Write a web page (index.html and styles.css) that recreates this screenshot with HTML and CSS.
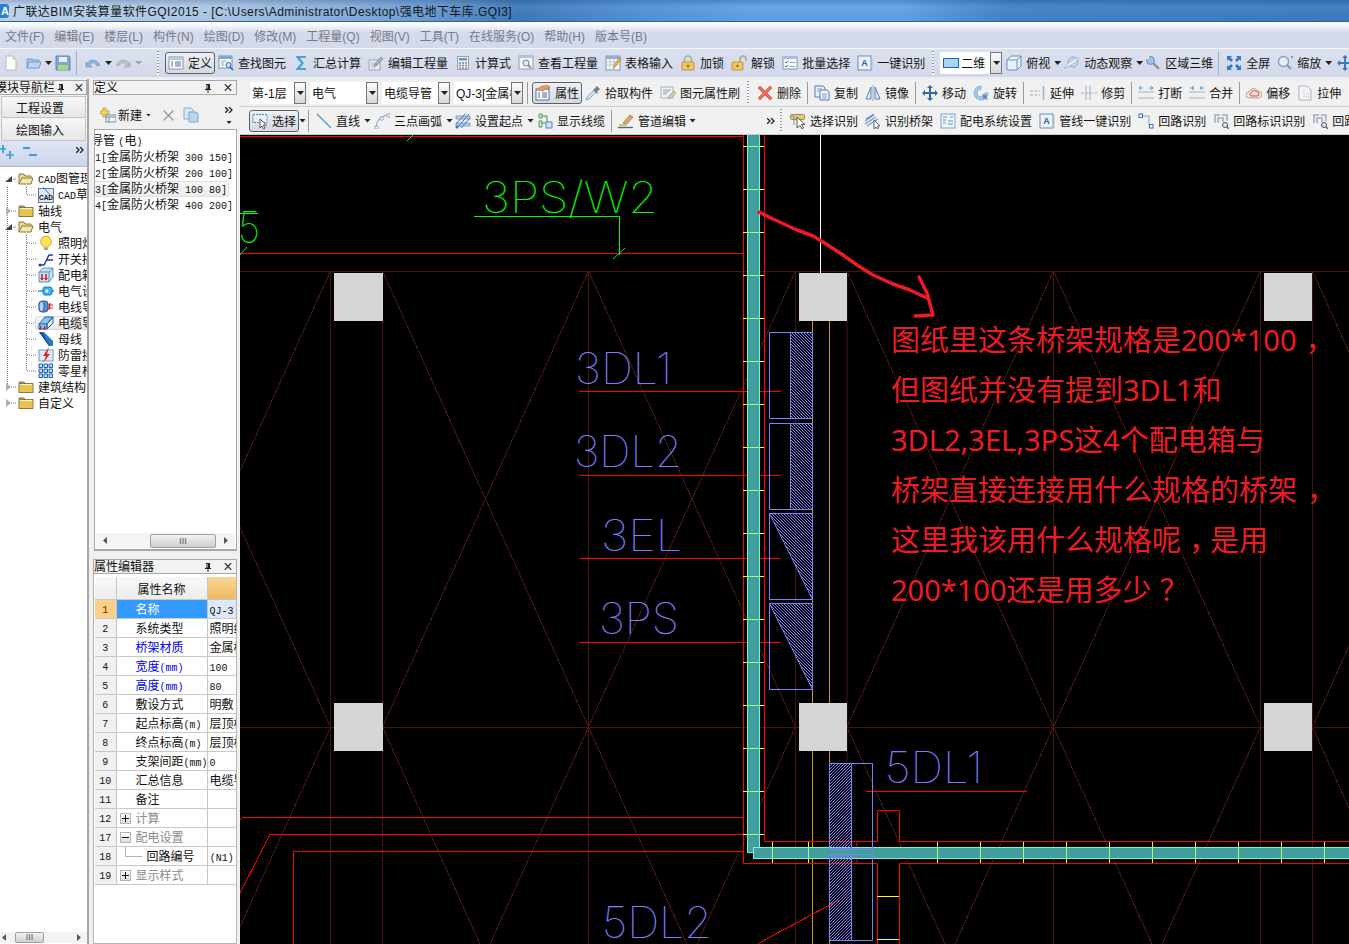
FILE: index.html
```html
<!DOCTYPE html>
<html lang="zh-CN">
<head>
<meta charset="utf-8">
<title>广联达BIM安装算量软件GQI2015</title>
<link rel="stylesheet" href="styles.css">
</head>
<body>
<svg class="defs" width="0" height="0" aria-hidden="true">
<defs>
<symbol id="i-new" viewBox="0 0 16 16"><path d="M3 1h7l3 3v11H3z" fill="#fff" stroke="#b8b8b8"/><path d="M10 1v3h3" fill="#e8e8e8" stroke="#b8b8b8"/></symbol>
<symbol id="i-open" viewBox="0 0 16 16"><path d="M1 13V4h5l1 1h6v2" fill="#a9c8ea" stroke="#6f9cc9"/><path d="M1 13l2-6h12l-2 6z" fill="#bcd6f2" stroke="#6f9cc9"/></symbol>
<symbol id="i-save" viewBox="0 0 16 16"><path d="M1 1h13l1 1v13H1z" fill="#7fa8d6" stroke="#5d86b5"/><path d="M4 2h8v5H4z" fill="#e8f0f8"/><path d="M3 10h10v5H3z" fill="#a8d878"/></symbol>
<symbol id="i-undo" viewBox="0 0 16 16"><path d="M2 10C3 4 11 3 15 10l-3 1C10 7 7 7 5 10l2 2H1V7z" fill="#8fb4dc" stroke="#6a94c2" stroke-width=".7"/></symbol>
<symbol id="i-redo" viewBox="0 0 16 16"><path d="M14 10C13 4 5 3 1 10l3 1c2-4 5-4 7-1l-2 2h6V7z" fill="#bcc0c8" stroke="#a4a8b0" stroke-width=".7"/></symbol>
<symbol id="i-def" viewBox="0 0 16 16"><rect x="1" y="2" width="14" height="12" fill="#fff" stroke="#7f94b4"/><path d="M1 2h14v3H1z" fill="#b4c8e4"/><path d="M7 7h6M7 9h6M7 11h6M3 7h2M3 9h2M3 11h2" stroke="#4a6a94"/></symbol>
<symbol id="i-find" viewBox="0 0 16 16"><rect x="1" y="1" width="13" height="12" fill="#fff" stroke="#6f93bd"/><path d="M1 1h13v3H1z" fill="#7fa6d3"/><path d="M3 6h5M3 8h3M3 10h3" stroke="#8aa"/><circle cx="10.5" cy="10" r="2.5" fill="#cfe6fa" stroke="#2b6aa8"/><path d="M12 12l3 3" stroke="#2b6aa8" stroke-width="1.6"/></symbol>
<symbol id="i-sum" viewBox="0 0 16 16"><path d="M3 1h10v2H7l4 5-4 5h6v2H3v-1l5-6-5-6z" fill="#49a4dc"/></symbol>
<symbol id="i-edit" viewBox="0 0 16 16"><path d="M1 5h11v10H1z" fill="#e8ecf2" stroke="#9aa4b0"/><path d="M3 8h7M3 10h7M3 12h5" stroke="#b0b8c4"/><path d="M7 9l6-7 2 2-6 6-3 1z" fill="#a8b4c4" stroke="#6f7c8c" stroke-width=".7"/></symbol>
<symbol id="i-calc" viewBox="0 0 16 16"><rect x="2.500" y="1.500" width="11" height="13" fill="#eef0f4" stroke="#97a0ac"/><rect x="4" y="3" width="8" height="2.500" fill="#5f9bd2"/><path d="M4 8h2M7 8h2M10 8h2M4 10.500h2M7 10.500h2M10 10.500h2M4 13h2M7 13h2M10 13h2" stroke="#7a8490" stroke-width="1.300"/></symbol>
<symbol id="i-view" viewBox="0 0 16 16"><rect x="1" y="1" width="14" height="13" fill="#f2f4f8" stroke="#96a0ae"/><path d="M1 1h14v2H1z" fill="#b5c5da"/><circle cx="8" cy="8" r="3" fill="#dbe9f6" stroke="#71869e"/><path d="M10 10l3 3" stroke="#8a7a5a" stroke-width="1.600"/></symbol>
<symbol id="i-tbl" viewBox="0 0 16 16"><rect x="1" y="1" width="14" height="14" fill="#fff" stroke="#7f93ad"/><path d="M1 1h14v3H1z" fill="#8fb0d6"/><path d="M1 7h14M1 10h14M5 4v11M9 4v11" stroke="#b6c2d0"/><path d="M8 14l1-4 5-7 2 1-5 7z" fill="#e8b93a" stroke="#a07c18" stroke-width=".6"/></symbol>
<symbol id="i-lock" viewBox="0 0 16 16"><path d="M4.500 7V4.500a3.500 3.500 0 0 1 7 0V7" fill="none" stroke="#b0a890" stroke-width="1.700"/><rect x="2" y="7" width="12" height="8" rx="1" fill="#edc765" stroke="#b8923a"/><circle cx="8" cy="11" r="1.200" fill="#8c6a1a"/></symbol>
<symbol id="i-unlock" viewBox="0 0 16 16"><path d="M9 7V4a3 3 0 0 1 6 0v2" fill="none" stroke="#b0a890" stroke-width="1.700"/><rect x="1" y="7" width="11" height="8" rx="1" fill="#edc765" stroke="#b8923a"/><circle cx="6.500" cy="11" r="1.200" fill="#8c6a1a"/></symbol>
<symbol id="i-batch" viewBox="0 0 16 16"><rect x="1" y="2" width="14" height="12" fill="#f4f7fb" stroke="#7f98b8"/><path d="M1 2h14v2H1z" fill="#a6bfdc"/><path d="M3 7l1 1 2-2M3 11l1 1 2-2" fill="none" stroke="#4a7a3a"/><path d="M8 7.500h5M8 11.500h5" stroke="#8da0b8"/></symbol>
<symbol id="i-a" viewBox="0 0 16 16"><rect x="1" y="1" width="13" height="14" fill="#eaf2fb" stroke="#6f8eb4"/><rect x="14" y="3" width="1.500" height="12" fill="#b4bcc6"/><text x="7.500" y="10.500" font-size="9" font-weight="700" text-anchor="middle" fill="#2f5f9c" font-family="Liberation Sans">A</text></symbol>
<symbol id="i-rect" viewBox="0 0 16 16"><rect x=".5" y="3.500" width="15" height="9" fill="#a9d3f2" stroke="#1c6aa8"/></symbol>
<symbol id="i-cube" viewBox="0 0 16 16"><path d="M1 5h10v10H1zM1 5l4-4h10v10l-4 4M11 5l4-4" fill="#e8f2fb" stroke="#6c92b6"/></symbol>
<symbol id="i-orbit" viewBox="0 0 16 16"><circle cx="9" cy="7" r="5" fill="#c5d9ee" stroke="#8aa6c6"/><path d="M0 13C4 13 14 6 15 3c-2-1-11 4-15 10z" fill="#e6eef7" stroke="#8aa6c6" stroke-width=".7"/></symbol>
<symbol id="i-r3d" viewBox="0 0 16 16"><path d="M8 8l6 6" stroke="#8a8f96" stroke-width="2.400"/><circle cx="5.500" cy="5.500" r="4" fill="#9cc2ea" stroke="#7089a8"/><path d="M1 1h3v3H1z" fill="#f4e6a8"/></symbol>
<symbol id="i-full" viewBox="0 0 16 16"><path d="M1 1h5L4.500 2.500 7 5 5 7 2.500 4.500 1 6zM15 1v5l-1.500-1.500L11 7 9 5l2.500-2.500L10 1zM1 15v-5l1.500 1.500L5 9l2 2-2.500 2.500L6 15zM15 15h-5l1.500-1.500L9 11l2-2 2.500 2.500L15 10z" fill="#3a78c0"/></symbol>
<symbol id="i-zoom" viewBox="0 0 16 16"><circle cx="6.500" cy="6.500" r="5" fill="#e4eef8" stroke="#7e9fc4" stroke-width="1.300"/><path d="M10 10l4 4" stroke="#8a96a4" stroke-width="2"/><path d="M0 15h15" stroke="#d8d8d8"/><path d="M14 2h2M15 1v2" stroke="#6688aa"/></symbol>
<symbol id="i-pan" viewBox="0 0 16 16"><path d="M8 0l3 3H9v4h4V5l3 3-3 3V9H9v4h2l-3 3-3-3h2V9H3v2L0 8l3-3v2h4V3H5z" fill="#3b78c4"/></symbol>
<symbol id="i-prop" viewBox="0 0 16 16"><rect x="1" y="4" width="13" height="11" fill="#fff" stroke="#4f6f9a"/><path d="M3 8h2M7 8h5M3 10h2M7 10h5M3 12h2M7 12h5" stroke="#3a6aa8"/><path d="M2 5c3-4 7-5 12-4l1 2c-3 0-5 2-7 3z" fill="#e0a060" stroke="#a86a30" stroke-width=".6"/></symbol>
<symbol id="i-pick" viewBox="0 0 16 16"><path d="M1 15l1-3 7-7 2 2-7 7z" fill="#cfe4f4" stroke="#6a9cc4" stroke-width=".8"/><path d="M9 4l3-3 3 3-3 3 1 1-1 1-4-4 1-1z" fill="#76808c"/></symbol>
<symbol id="i-brush" viewBox="0 0 16 16"><rect x="1" y="2" width="12" height="11" fill="#f2f4f8" stroke="#aab2bc"/><path d="M3 5h8M3 7h6M3 9h4" stroke="#8ca2ba"/><path d="M8 12l6-6 2 2-6 6z" fill="#d8cfa8" stroke="#9a9070" stroke-width=".7"/></symbol>
<symbol id="i-del" viewBox="0 0 16 16"><path d="M1 3l2-2 5 5 5-5 2 2-5 5 5 5-2 2-5-5-5 5-2-2 5-5z" fill="#ee6a5a" stroke="#c8402f" stroke-width=".6"/></symbol>
<symbol id="i-copy" viewBox="0 0 16 16"><path d="M1 1h8l2 2v9H1z" fill="#eaf3fb" stroke="#4f7fb0"/><path d="M6 5h7l2 2v8H6z" fill="#f4f8fc" stroke="#4f7fb0"/><path d="M3 4h5M3 6h2M8 9h5M8 11h5M8 13h5" stroke="#7fa4c8"/></symbol>
<symbol id="i-mirror" viewBox="0 0 16 16"><path d="M6 2v12H1zM10 2v12h5z" fill="#dfe9f6" stroke="#5480b4"/><path d="M8 0v16" stroke="#98a8bc"/></symbol>
<symbol id="i-move" viewBox="0 0 16 16"><path d="M8 0l3 3H9v4h4V5l3 3-3 3V9H9v4h2l-3 3-3-3h2V9H3v2L0 8l3-3v2h4V3H5z" fill="#3068b4"/></symbol>
<symbol id="i-rot" viewBox="0 0 16 16"><path d="M8 1a7 7 0 1 0 7 7h-3a4 4 0 1 1-4-4z" fill="#a8c8e8" stroke="#6f9ccc" stroke-width=".7"/><path d="M9 9l6 2-2 1 2 2-1 1-2-2-1 2z" fill="#5a86bc"/></symbol>
<symbol id="i-ext" viewBox="0 0 16 16"><path d="M13.500 1v14M0 6h10M0 10h10" stroke="#9db0c6" stroke-dasharray="3 1.500"/><path d="M13.500 1v14" stroke="#9db0c6" stroke-width="1.500"/></symbol>
<symbol id="i-trim" viewBox="0 0 16 16"><path d="M5 1v14M9 1v14" stroke="#9db0c6"/><path d="M0 8h16" stroke="#9db0c6" stroke-dasharray="3 1.500"/></symbol>
<symbol id="i-break" viewBox="0 0 16 16"><path d="M0 7h16M0 13h16" stroke="#9cb2ca"/><path d="M5 3L1 3m2-2L1 3l2 2M11 3h4m-2-2l2 2-2 2" fill="none" stroke="#5d94c4"/></symbol>
<symbol id="i-join" viewBox="0 0 16 16"><path d="M0 7h16M0 13h16" stroke="#9cb2ca"/><path d="M1 3h4m-2-2l2 2-2 2M15 3h-4m2-2l-2 2 2 2" fill="none" stroke="#5d94c4"/></symbol>
<symbol id="i-off" viewBox="0 0 16 16"><path d="M3 13a3 3 0 0 1 0-6 5 5 0 0 1 9-1 3.500 3.500 0 0 1 1 7z" fill="#f6e2dc" stroke="#b8a0a0"/><path d="M5 11a2 2 0 0 1 0-3 3.500 3.500 0 0 1 6-1 2 2 0 0 1 0 4z" fill="none" stroke="#d84a3a"/></symbol>
<symbol id="i-str" viewBox="0 0 16 16"><path d="M2 1h8l4 4v10H2z" fill="#f6f6f6" stroke="#a8b4c2"/><path d="M7 5v8M9 9h3M9 12h3" stroke="#a8b4c2" stroke-dasharray="1 1"/></symbol>
<symbol id="i-sel" viewBox="0 0 16 16"><rect x="1" y="1.500" width="14" height="8" fill="#e6f0fa" stroke="#4f86c4" stroke-dasharray="2 1"/><path d="M8 6v9l2-2 1.500 3 1.500-1-1.500-3h3z" fill="#fff" stroke="#555"/></symbol>
<symbol id="i-line" viewBox="0 0 16 16"><path d="M1 1l14 14" stroke="#5c92c8" stroke-width="1.200"/></symbol>
<symbol id="i-arc" viewBox="0 0 16 16"><path d="M2 14C3 7 7 3 14 2" fill="none" stroke="#7e9abc"/><path d="M1 13h3v3H1zM6 4h3v3H6zM13 1h3v3h-3z" fill="#fff" stroke="#7e9abc" stroke-width=".8"/></symbol>
<symbol id="i-start" viewBox="0 0 16 16"><path d="M1 3h14v3H1zM1 10h14v3H1z" fill="#bcd0ea" stroke="#5c88c0" stroke-width=".7"/><path d="M2 15L14 1M6 15L15 5M1 11L10 1" stroke="#4876ae"/><circle cx="2" cy="14" r="1.500" fill="#3a78c0"/></symbol>
<symbol id="i-show" viewBox="0 0 16 16"><path d="M2 1h3v4H2zM2 8h3v6H2zM5 3h5v4M5 10h4M10 7v3" fill="#cfeacf" stroke="#4f9a5a"/><rect x="9" y="9" width="6" height="6" fill="#d0e4f8" stroke="#4f86c4"/></symbol>
<symbol id="i-pipe" viewBox="0 0 16 16"><path d="M5 10l7-8 3 2-7 8z" fill="#d9a868" stroke="#a07438" stroke-width=".7"/><path d="M1 11h8v2H1z" fill="#e8c050"/><path d="M0 14.500h15" stroke="#2f6fb0" stroke-width="1.400"/></symbol>
<symbol id="i-selid" viewBox="0 0 16 16"><rect x=".5" y="1.500" width="14" height="5" rx="1" fill="#f0cc60" stroke="#8a8a8a"/><path d="M1 3h3v9" fill="none" stroke="#8a8a8a"/><path d="M7 4v11l3-2.500 2 3.500 1.500-1-2-3.500H15z" fill="#fff" stroke="#555"/></symbol>
<symbol id="i-bridge" viewBox="0 0 16 16"><path d="M0 8l9-6M0 11l11-7M2 13l11-7M1 6l8-5" stroke="#6a98cc" stroke-width="1.300"/><path d="M9 7v9l2-2 1 2 1.500-1-1-2h2.500z" fill="#fff" stroke="#666"/></symbol>
<symbol id="i-pd" viewBox="0 0 16 16"><rect x="1" y="1" width="14" height="14" fill="#eef5fb" stroke="#7ea6cc"/><path d="M3 4h4M3 7h3M3 10h3M10 4h3M8 8h5M8 11h5" stroke="#5f92c4"/></symbol>
<symbol id="i-loop" viewBox="0 0 16 16"><path d="M3 3h8v10h3" fill="none" stroke="#8ca0b8"/><rect x="1" y="1" width="3.500" height="3.500" fill="#fff" stroke="#2f6fd0"/><rect x="11.500" y="11.500" width="3.500" height="3.500" fill="#fff" stroke="#2f6fd0"/></symbol>
<symbol id="i-loopn" viewBox="0 0 16 16"><path d="M2 10V2h5M9 2h5v6M5 10V5h5v4" fill="none" stroke="#96aac2" stroke-width="1.500"/><circle cx="12" cy="12" r="2.500" fill="#d8e8f6" stroke="#555"/><path d="M14 14l2 2" stroke="#555" stroke-width="1.300"/></symbol>
<symbol id="f-open" viewBox="0 0 16 16"><path d="M1 13V3h5l1 2h6v2" fill="#ecd895" stroke="#8c7a44"/><path d="M1 13l3-6h11l-2 6z" fill="#f4e6b0" stroke="#8c7a44"/></symbol>
<symbol id="f-closed" viewBox="0 0 16 16"><path d="M1 4V3h5l1 1z" fill="#e8d488" stroke="#8c7a44"/><rect x="1" y="4.500" width="14" height="9" fill="#e6c44e" stroke="#8c7a44"/><path d="M2 5.500h12" stroke="#fff2b8"/></symbol>
<symbol id="t-cad" viewBox="0 0 16 16"><rect x=".5" y="1.500" width="15" height="14" fill="#dce8f6" stroke="#5a7ea8"/><path d="M5 0l7 8" stroke="#4a6a94"/><text x="8" y="13" font-size="6.500" font-weight="700" text-anchor="middle" fill="#111" font-family="Liberation Sans">CAD</text></symbol>
<symbol id="t-bulb" viewBox="0 0 16 16"><path d="M8 1a5.500 5.500 0 0 0-3 10l1 1h4l1-1A5.500 5.500 0 0 0 8 1z" fill="#ffe25a" stroke="#d2a820"/><path d="M6 12.500h4v2.500H6z" fill="#9aa4b0"/></symbol>
<symbol id="t-sw" viewBox="0 0 16 16"><path d="M1 14h5l5-10h4M9 9h6" fill="none" stroke="#2238b8" stroke-width="1.400"/><circle cx="2" cy="14" r="1.500" fill="#2238b8"/></symbol>
<symbol id="t-box" viewBox="0 0 16 16"><path d="M1 5h10v10H1zM1 5l4-4h10v9l-4 5M11 5l4-4" fill="#c7e0f4" stroke="#5e8fc0"/><path d="M4 7v6M8 7v6" stroke="#d81818" stroke-width="1.500"/><path d="M2.500 11L4 13l1.500-2M6.500 11L8 13l1.500-2" fill="none" stroke="#d81818"/></symbol>
<symbol id="t-conn" viewBox="0 0 16 16"><path d="M0 8h16" stroke="#2aa0d8" stroke-width="1.600"/><rect x="5" y="4" width="9" height="8" rx="2" fill="#38b8e8" stroke="#1878b0"/><circle cx="9" cy="8" r="1.500" fill="#fff"/></symbol>
<symbol id="t-wire" viewBox="0 0 16 16"><rect x="1" y="2" width="9" height="11" rx="3" fill="#5e8ec4" stroke="#2a5a94"/><ellipse cx="3.500" cy="7.500" rx="2.500" ry="5" fill="#b6d0ec" stroke="#2a5a94"/><path d="M10 6h5M10 9h5M12 4l-1 7" stroke="#e01818" stroke-width="1.200"/></symbol>
<symbol id="t-tray" viewBox="0 0 16 16"><path d="M1 9l6-7h8L9 9v5H1z" fill="#8fc4ec" stroke="#1e60a8"/><path d="M1 9h8l6-7M9 9v5l6-6V2" fill="none" stroke="#1e60a8"/><path d="M2 15l1-4M6 15l1-4" stroke="#e01818" stroke-width="1.300"/></symbol>
<symbol id="t-bus" viewBox="0 0 16 16"><path d="M1 1h5l9 9v5h-4z" fill="#2a78c8"/><path d="M1 1h3l8 14h-1z" fill="#1a4a98"/></symbol>
<symbol id="t-thun" viewBox="0 0 16 16"><rect x="1" y="3" width="14" height="11" fill="#dcecf8" stroke="#6c98c4"/><path d="M11 0L5 9h3l-3 7 7-9H9z" fill="#e82018"/></symbol>
<symbol id="t-grid" viewBox="0 0 16 16"><path d="M1 1h3.500v3.500H1zM6 1h3.500v3.500H6zM11 1h3.500v3.500H11zM1 6h3.500v3.500H1zM6 6h3.500v3.500H6zM11 6h3.500v3.500H11zM1 11h3.500v3.500H1zM6 11h3.500v3.500H6zM11 11h3.500v3.500H11z" fill="#cde0f4" stroke="#1a5cb0"/></symbol>
<symbol id="a-add" viewBox="0 0 16 16"><path d="M3 1h3v3h3v3H6v3H3V7H0V4h3z" fill="#f4d264" stroke="#b8922c" stroke-width=".7"/><rect x="6" y="8" width="10" height="7" fill="#eef3fa" stroke="#6f8cb0"/><path d="M6 10h10M9 10v5" stroke="#6f8cb0"/></symbol>
<symbol id="a-x" viewBox="0 0 16 16"><path d="M2 2l12 12M14 2L2 14" stroke="#808890" stroke-width="1.500"/></symbol>
<symbol id="a-copy" viewBox="0 0 16 16"><path d="M1 1h7l2 2v9H1z" fill="#d8e6f6" stroke="#8fb0d4"/><path d="M6 5h7l2 2v8H6z" fill="#bcd4ee" stroke="#7fa4cc"/></symbol>
<symbol id="n-plus" viewBox="0 0 16 16"><path d="M3 1v8M0 5h6" stroke="#3a9ae0" stroke-width="1.700"/><path d="M10 7v8M6 11h8" stroke="#3a9ae0" stroke-width="1.700"/></symbol>
<symbol id="n-minus" viewBox="0 0 16 16"><path d="M1 4h7M7 11h8" stroke="#3a9ae0" stroke-width="2"/></symbol>
<symbol id="pin" viewBox="0 0 8 10"><path d="M2 1h4v5h1v1H4.500v3h-1V7H1V6h1z" fill="#222"/><path d="M3 2v3.500" stroke="#fff"/></symbol>
<symbol id="more" viewBox="0 0 8 6"><path d="M0 0l3 3-3 3M4 0l3 3-3 3" fill="none" stroke="#222" stroke-width="1.300"/></symbol>
<pattern id="hatchA" width="3" height="3" patternUnits="userSpaceOnUse"><path d="M0 0l3 3" stroke="#8080ff" stroke-width="1" shape-rendering="crispEdges"/></pattern>
<pattern id="hatchB" width="3" height="3" patternUnits="userSpaceOnUse"><path d="M0 3l3-3" stroke="#8080ff" stroke-width="1" shape-rendering="crispEdges"/></pattern>
<clipPath id="trayV"><rect x="747" y="135" width="13" height="718"/></clipPath>
<clipPath id="trayH"><rect x="753" y="847" width="596" height="12"/></clipPath>
</defs>
</svg>

<header class="titlebar">
  <span class="appicon">A</span>
  <span class="titletext">广联达BIM安装算量软件GQI2015 - [C:\Users\Administrator\Desktop\强电地下车库.GQI3]</span>
</header>

<nav class="menubar">
  <span>文件(F)</span><span>编辑(E)</span><span>楼层(L)</span><span>构件(N)</span><span>绘图(D)</span><span>修改(M)</span><span>工程量(Q)</span><span>视图(V)</span><span>工具(T)</span><span>在线服务(O)</span><span>帮助(H)</span><span>版本号(B)</span>
</nav>

<div class="toolbar main-tools">
  <svg class="ic mr7"><use href="#i-new"/></svg>
  <svg class="ic mr3"><use href="#i-open"/></svg><i class="arr mr3"></i>
  <svg class="ic mr5"><use href="#i-save"/></svg>
  <i class="sep dim mr8"></i>
  <svg class="ic mr4"><use href="#i-undo"/></svg><i class="arr mr3"></i>
  <svg class="ic mr4"><use href="#i-redo"/></svg><i class="arr off mr15"></i>
  <i class="grip mr6"></i>
  <span class="ti btn mr3"><svg class="ic"><use href="#i-def"/></svg>定义</span>
  <span class="ti"><svg class="ic"><use href="#i-find"/></svg>查找图元</span>
  <span class="ti"><svg class="ic"><use href="#i-sum"/></svg>汇总计算</span>
  <span class="ti"><svg class="ic"><use href="#i-edit"/></svg>编辑工程量</span>
  <span class="ti"><svg class="ic"><use href="#i-calc"/></svg>计算式</span>
  <span class="ti"><svg class="ic"><use href="#i-view"/></svg>查看工程量</span>
  <span class="ti"><svg class="ic"><use href="#i-tbl"/></svg>表格输入</span>
  <span class="ti"><svg class="ic"><use href="#i-lock"/></svg>加锁</span>
  <span class="ti"><svg class="ic"><use href="#i-unlock"/></svg>解锁</span>
  <span class="ti"><svg class="ic"><use href="#i-batch"/></svg>批量选择</span>
  <span class="ti"><svg class="ic"><use href="#i-a"/></svg>一键识别</span>
  <i class="grip mr6"></i>
  <span class="combo mode mr4"><span class="val"><svg class="ic"><use href="#i-rect"/></svg>二维</span><b class="drop"></b></span>
  <span class="ti mr4"><svg class="ic"><use href="#i-cube"/></svg>俯视</span><i class="arr mr3"></i>
  <span class="ti mr4"><svg class="ic"><use href="#i-orbit"/></svg>动态观察</span><i class="arr mr2"></i>
  <span class="ti mr5"><svg class="ic"><use href="#i-r3d"/></svg>区域三维</span>
  <i class="sep dim mr7"></i>
  <span class="ti mr7"><svg class="ic"><use href="#i-full"/></svg>全屏</span>
  <span class="ti mr4"><svg class="ic"><use href="#i-zoom"/></svg>缩放</span><i class="arr mr5"></i>
  <svg class="ic"><use href="#i-pan"/></svg>
</div>

<main class="workspace">
  <aside class="nav">
    <div class="phead navhead"><span class="ptitle">模块导航栏</span><svg class="pin"><use href="#pin"/></svg><span class="close">×</span></div>
    <div class="navbtn first">工程设置</div>
    <div class="navbtn">绘图输入</div>
    <div class="navtools">
      <svg class="ic"><use href="#n-plus"/></svg><svg class="ic"><use href="#n-minus"/></svg>
      <svg class="more"><use href="#more"/></svg>
    </div>
    <div class="tree">
      <svg class="treelines" width="85" height="240"><path d="M7.500 19V219M26.500 19v8M26.500 67V203M11 11h6M11 43h6M11 59h6M11 219h6M11 235h6M27 27h10M27 75h10M27 91h10M27 107h10M27 123h10M27 139h10M27 155h10M27 171h10M27 187h10M27 203h10" stroke="#777" stroke-dasharray="1 1" fill="none"/></svg>
      <div class="tr"><i class="tw open"></i><svg class="ic"><use href="#f-open"/></svg><span><span class="m">CAD</span>图管理</span></div>
      <div class="tr lv"><svg class="ic"><use href="#t-cad"/></svg><span><span class="m">CAD</span>草图</span></div>
      <div class="tr"><i class="tw"></i><svg class="ic"><use href="#f-closed"/></svg><span>轴线</span></div>
      <div class="tr"><i class="tw open"></i><svg class="ic"><use href="#f-open"/></svg><span>电气</span></div>
      <div class="tr lv"><svg class="ic"><use href="#t-bulb"/></svg><span>照明灯具</span></div>
      <div class="tr lv"><svg class="ic"><use href="#t-sw"/></svg><span>开关插座</span></div>
      <div class="tr lv"><svg class="ic"><use href="#t-box"/></svg><span>配电箱柜</span></div>
      <div class="tr lv"><svg class="ic"><use href="#t-conn"/></svg><span>电气设备</span></div>
      <div class="tr lv"><svg class="ic"><use href="#t-wire"/></svg><span>电线导管</span></div>
      <div class="tr lv cur"><svg class="ic"><use href="#t-tray"/></svg><span>电缆导管</span></div>
      <div class="tr lv"><svg class="ic"><use href="#t-bus"/></svg><span>母线</span></div>
      <div class="tr lv"><svg class="ic"><use href="#t-thun"/></svg><span>防雷接地</span></div>
      <div class="tr lv"><svg class="ic"><use href="#t-grid"/></svg><span>零星构件</span></div>
      <div class="tr"><i class="tw"></i><svg class="ic"><use href="#f-closed"/></svg><span>建筑结构</span></div>
      <div class="tr"><i class="tw"></i><svg class="ic"><use href="#f-closed"/></svg><span>自定义</span></div>
      <div class="hscroll navscroll"><i class="sl"></i><span class="thumb">III</span><i class="sr"></i></div>
    </div>
  </aside>

  <section class="defcol">
    <div class="phead"><span class="ptitle">定义</span><svg class="pin"><use href="#pin"/></svg><span class="close">×</span></div>
    <div class="deftools">
      <svg class="ic"><use href="#a-add"/></svg><span class="newlabel">新建</span><i class="arr small"></i>
      <svg class="ic xicon"><use href="#a-x"/></svg><svg class="ic"><use href="#a-copy"/></svg>
      <span class="moremark"><svg class="more"><use href="#more"/></svg><i class="arr small"></i></span>
    </div>
    <div class="deflist">
      <div class="dr head"><span class="c">电缆导管</span> <span class="m">(</span><span class="c">电</span><span class="m">)</span></div>
      <div class="dr"><span class="m">QJ-1[</span><span class="c">金属防火桥架</span><span class="m"> 300 150]</span></div>
      <div class="dr"><span class="m">QJ-2[</span><span class="c">金属防火桥架</span><span class="m"> 200 100]</span></div>
      <div class="dr sel"><span class="m">QJ-3[</span><span class="c">金属防火桥架</span><span class="m"> 100 80]</span></div>
      <div class="dr"><span class="m">QJ-4[</span><span class="c">金属防火桥架</span><span class="m"> 400 200]</span></div>
      <div class="hscroll defscroll"><i class="sl"></i><span class="thumb">III</span><i class="sr"></i></div>
    </div>
    <div class="phead prophead"><span class="ptitle wide">属性编辑器</span><svg class="pin"><use href="#pin"/></svg><span class="close">×</span></div>
    <div class="propbox">
      <table class="prop">
        <colgroup><col class="cn"><col class="cl"><col class="cv"></colgroup>
        <thead><tr><th></th><th>属性名称</th><th class="valh"></th></tr></thead>
        <tbody>
          <tr class="cur"><td class="n">1</td><td class="k">名称</td><td class="v"><span class="m">QJ-3</span></td></tr>
          <tr><td class="n">2</td><td class="k">系统类型</td><td class="v">照明线路</td></tr>
          <tr><td class="n">3</td><td class="k pub">桥架材质</td><td class="v">金属桥架</td></tr>
          <tr><td class="n">4</td><td class="k pub">宽度<span class="m">(mm)</span></td><td class="v"><span class="m">100</span></td></tr>
          <tr><td class="n">5</td><td class="k pub">高度<span class="m">(mm)</span></td><td class="v"><span class="m">80</span></td></tr>
          <tr><td class="n">6</td><td class="k">敷设方式</td><td class="v">明敷</td></tr>
          <tr><td class="n">7</td><td class="k">起点标高<span class="m">(m)</span></td><td class="v">层顶标高</td></tr>
          <tr><td class="n">8</td><td class="k">终点标高<span class="m">(m)</span></td><td class="v">层顶标高</td></tr>
          <tr><td class="n">9</td><td class="k">支架间距<span class="m">(mm)</span></td><td class="v"><span class="m">0</span></td></tr>
          <tr><td class="n">10</td><td class="k">汇总信息</td><td class="v">电缆导管</td></tr>
          <tr><td class="n">11</td><td class="k">备注</td><td class="v"></td></tr>
          <tr><td class="n">12</td><td class="k grp"><i class="pm plus"></i>计算</td><td class="v"></td></tr>
          <tr><td class="n">17</td><td class="k grp"><i class="pm"></i>配电设置</td><td class="v"></td></tr>
          <tr><td class="n">18</td><td class="k sub"><i class="elbow"></i>回路编号</td><td class="v mid"><span class="m">(N1)</span></td></tr>
          <tr><td class="n">19</td><td class="k grp"><i class="pm plus"></i>显示样式</td><td class="v"></td></tr>
        </tbody>
      </table>
    </div>
  </section>

  <section class="stage">
    <div class="toolbar row2">
      <span class="combo c1"><span class="val">第-1层</span><b class="drop"></b></span>
      <span class="combo c2"><span class="val">电气</span><b class="drop"></b></span>
      <span class="combo c2"><span class="val">电缆导管</span><b class="drop"></b></span>
      <span class="combo c3"><span class="val">QJ-3[金属桥架</span><b class="drop"></b></span>
      <i class="sep"></i>
      <span class="ti btn mr3"><svg class="ic"><use href="#i-prop"/></svg>属性</span>
      <span class="ti"><svg class="ic"><use href="#i-pick"/></svg>拾取构件</span>
      <span class="ti"><svg class="ic"><use href="#i-brush"/></svg>图元属性刷</span>
      <i class="grip mr8"></i>
      <span class="ti ms"><svg class="ic"><use href="#i-del"/></svg>删除</span><i class="sep sp"></i>
      <span class="ti"><svg class="ic"><use href="#i-copy"/></svg>复制</span>
      <span class="ti ms"><svg class="ic"><use href="#i-mirror"/></svg>镜像</span><i class="sep sp"></i>
      <span class="ti"><svg class="ic"><use href="#i-move"/></svg>移动</span>
      <span class="ti ms"><svg class="ic"><use href="#i-rot"/></svg>旋转</span><i class="sep sp"></i>
      <span class="ti"><svg class="ic"><use href="#i-ext"/></svg>延伸</span>
      <span class="ti ms"><svg class="ic"><use href="#i-trim"/></svg>修剪</span><i class="sep sp"></i>
      <span class="ti"><svg class="ic"><use href="#i-break"/></svg>打断</span>
      <span class="ti ms"><svg class="ic"><use href="#i-join"/></svg>合并</span><i class="sep sp"></i>
      <span class="ti"><svg class="ic"><use href="#i-off"/></svg>偏移</span>
      <span class="ti"><svg class="ic"><use href="#i-str"/></svg>拉伸</span>
    </div>
    <div class="toolbar row3">
      <span class="ti btn mr0"><svg class="ic"><use href="#i-sel"/></svg>选择</span><i class="arr mr2"></i>
      <i class="sep"></i>
      <span class="ti mr4"><svg class="ic"><use href="#i-line"/></svg>直线</span><i class="arr mr3"></i>
      <span class="ti mr4"><svg class="ic"><use href="#i-arc"/></svg>三点画弧</span><i class="arr mr2"></i>
      <span class="ti mr4"><svg class="ic"><use href="#i-start"/></svg>设置起点</span><i class="arr mr3"></i>
      <span class="ti ms"><svg class="ic"><use href="#i-show"/></svg>显示线缆</span><i class="sep sp"></i>
      <span class="ti mr3"><svg class="ic"><use href="#i-pipe"/></svg>管道编辑</span><i class="arr mr71"></i>
      <svg class="more mr5"><use href="#more"/></svg>
      <i class="grip mr8"></i>
      <span class="ti"><svg class="ic"><use href="#i-selid"/></svg>选择识别</span>
      <span class="ti"><svg class="ic"><use href="#i-bridge"/></svg>识别桥架</span>
      <span class="ti"><svg class="ic"><use href="#i-pd"/></svg>配电系统设置</span>
      <span class="ti"><svg class="ic"><use href="#i-a"/></svg>管线一键识别</span>
      <span class="ti"><svg class="ic"><use href="#i-loop"/></svg>回路识别</span>
      <span class="ti"><svg class="ic"><use href="#i-loopn"/></svg>回路标识识别</span>
      <span class="ti"><svg class="ic"><use href="#i-loopn"/></svg>回路存盘</span>
    </div>
    <div class="canvas">
      <svg class="cad" viewBox="240 135 1109 809" width="1109" height="809">
        <g class="grid">
          <path d="M240 271.500H1349M240 727.500H1349M330.500 271V944M382.500 271V944M588.500 271V944M795.500 271V944M847 271V944M1053.500 271V944M1260.500 271V944M1312.500 271V944"/>
          <path class="diag" d="M330.500 271L240 471M382.500 271L588.500 727L795.500 271M588.500 271L382.500 727M588.500 271L795.500 727M847 271L1053.500 727L1260.500 271M1053.500 271L847 727M1053.500 271L1260.500 727M1312.500 271L1349 352M330.500 727L240 527M330.500 727L240 927M1312.500 727L1349 646M382.500 727L480 944M588.500 727L490 944M588.500 727L687 944M795.500 727L697 944M847 727L945 944M1053.500 727L955 944M1053.500 727L1152 944M1260.500 727L1162 944M1312.500 727L1349 808"/>
        </g>
        <rect class="col" x="334" y="273" width="49" height="48"/><rect class="col" x="799" y="273" width="48" height="48"/><rect class="col" x="1264" y="273" width="48" height="48"/>
        <rect class="col" x="334" y="703" width="49" height="48"/><rect class="col" x="799" y="703" width="48" height="48"/><rect class="col" x="1264" y="703" width="48" height="48"/>
        <path class="white" d="M820.500 135V273"/>
        <path class="orange" d="M812.500 321V703M829.500 321V703M812.500 751V944M829.500 751V944"/>
        <path class="red" d="M240 136.500H743M240 253.500H743M579 391.500H781M579 475.500H781M579 558.500H781M579 642.500H781M866 791.500H1027M243 817.500H743M270 834.500H743M293.500 851.500H743M293.500 851.500V944M743.500 135V863.500H877.500V944M764.500 135V841.500H877.500V810.500H899.500V841.500H1349M899.500 944V863.500H1349M857 841.500V847M857 858V863.500"/>
        <path class="redthin" d="M240 819.500L243 817.500M270 834.500L240 893M758 943.500L839 900"/>
        <path class="yellow" d="M743 146.500H764M743 189.500H764M743 232.500H764M743 275.500H764M743 318.500H764M743 361.500H764M743 404.500H764M743 447.500H764M743 490.500H764M743 533.500H764M743 576.500H764M743 619.500H764M743 662.500H764M743 705.500H764M743 748.500H764M743 791.500H764M743 834.500H764M772.500 842V863M808.500 842V863M937.500 842V863M980.500 842V863M1023.500 842V863M1066.500 842V863M1109.500 842V863M1152.500 842V863M1195.500 842V863M1238.500 842V863M1281.500 842V863M1324.500 842V863M877 896.500H899M877 939.500H899"/>
        <rect class="tray" x="747.500" y="134" width="12" height="718.500"/>
        <rect class="tray" x="753.500" y="847.500" width="600" height="11"/>
        <g class="tick" clip-path="url(#trayV)"><path d="M743 146.500H764M743 189.500H764M743 232.500H764M743 275.500H764M743 318.500H764M743 361.500H764M743 404.500H764M743 447.500H764M743 490.500H764M743 533.500H764M743 576.500H764M743 619.500H764M743 662.500H764M743 705.500H764M743 748.500H764M743 791.500H764M743 834.500H764"/></g>
        <g class="tick" clip-path="url(#trayH)"><path d="M772.500 842V863M808.500 842V863M937.500 842V863M980.500 842V863M1023.500 842V863M1066.500 842V863M1109.500 842V863M1152.500 842V863M1195.500 842V863M1238.500 842V863M1281.500 842V863M1324.500 842V863"/></g>
        <g class="boxes">
          <rect class="h1" x="790.500" y="332.500" width="22" height="86"/>
          <rect class="h1" x="790.500" y="423.500" width="22" height="86"/>
          <path class="h1" d="M769.500 513.500H812.500V599.500z"/>
          <path class="h1" d="M769.500 603.500H812.500V689.500z"/>
          <rect class="h2" x="829.500" y="763.500" width="22" height="86"/>
          <rect class="h2" x="829.500" y="854.500" width="22" height="86"/>
          <path class="bl" d="M769.500 332.500H812.500V418.500H769.500zM790.500 332.500V418.500M769.500 423.500H812.500V509.500H769.500zM790.500 423.500V509.500M769.500 513.500H812.500V599.500H769.500zM769.500 513.500L812.500 599.500M769.500 603.500H812.500V689.500H769.500zM769.500 603.500L812.500 689.500M829.500 763.500H872.500V849.500H829.500zM851.500 763.500V849.500M829.500 854.500H872.500V940.500H829.500zM851.500 854.500V940.500"/>
        </g>
        <g class="green">
          <path d="M474 216.500H619.500V255M613 259L625 248M240 213.500H258M240 255L247 247M407 141L413 135"/>
          <text class="cadtext" x="482" y="213" textLength="176" lengthAdjust="spacingAndGlyphs">3PS/W2</text>
          <text class="cadtext" x="238" y="243" textLength="22" lengthAdjust="spacingAndGlyphs">5</text>
        </g>
        <g class="blue">
          <text class="cadtext" x="575" y="384" textLength="97" lengthAdjust="spacingAndGlyphs">3DL1</text>
          <text class="cadtext" x="574" y="467" textLength="108" lengthAdjust="spacingAndGlyphs">3DL2</text>
          <text class="cadtext" x="601" y="551" textLength="81" lengthAdjust="spacingAndGlyphs">3EL</text>
          <text class="cadtext" x="599" y="634" textLength="80" lengthAdjust="spacingAndGlyphs">3PS</text>
          <text class="cadtext" x="885" y="783" textLength="98" lengthAdjust="spacingAndGlyphs">5DL1</text>
          <text class="cadtext" x="602" y="938" textLength="110" lengthAdjust="spacingAndGlyphs">5DL2</text>
        </g>
        <path class="mark" d="M759 212L773 219L797 230L813 236L823 242L843 255L857 265L873 275L893 284L910 290L927 298"/>
        <path class="mark" d="M919 277L927 293L933 315L915 316"/>
        <g class="note">
          <text x="891" y="351">图纸里这条桥架规格是200*100<tspan dx="9">，</tspan></text>
          <text x="891" y="401">但图纸并没有提到3DL1和</text>
          <text x="891" y="451">3DL2,3EL,3PS这4个配电箱与</text>
          <text x="891" y="501">桥架直接连接用什么规格的桥架<tspan dx="10">，</tspan></text>
          <text x="891" y="551">这里我该用什么规格呢<tspan dx="8">，</tspan><tspan dx="-8">是用</tspan></text>
          <text x="891" y="601">200*100还是用多少<tspan dx="8">？</tspan></text>
        </g>
      </svg>
    </div>
  </section>
</main>
</body>
</html>
```
FILE: styles.css
```css
* { box-sizing: border-box; }
html, body { margin: 0; height: 100%; }
body {
  width: 1349px; height: 944px; overflow: hidden; background: #f0f0f0; color: #111;
  font: 12px/16px "Liberation Sans", "Noto Sans CJK SC", sans-serif;
  display: flex; flex-direction: column;
}
.defs { position: absolute; }
i { display: block; font-style: normal; flex: none; }
.m { font-family: "Liberation Mono", monospace; font-size: 10px; white-space: pre; }

.titlebar {
  height: 22px; flex: none; display: flex; align-items: center; padding-top: 2px;
  border-bottom: 1px solid #2f6299;
  background:
    linear-gradient(180deg, rgba(30,60,110,.22), rgba(255,255,255,.06) 30%, rgba(255,255,255,0) 100%),
    linear-gradient(90deg, #bcd0e8 0, #a9c3e2 220px, #6d9bd0 420px, #3c76b8 520px, #4f8ed4 640px, #5d9fe4 760px, #5d9fe4 900px, #3f7fc4 1010px, #3a78bd 1349px);
}
.appicon {
  width: 9px; height: 14px; margin: -2px 4px 0 0; background: #2e7fd6; color: #fff;
  font: 700 11px/14px "Liberation Sans"; border-radius: 0 3px 3px 0; text-align: right; overflow: hidden;
}
.titletext { font-size: 12px; letter-spacing: .43px; white-space: nowrap; color: #101820; }

.menubar {
  height: 26px; flex: none; display: flex; align-items: center; gap: 10px; padding: 3px 0 0 5px;
  background: linear-gradient(180deg, #ffffff 0, #f4f6fb 15%, #d6dbec 40%, #d4d9ea 100%);
  color: #777b88; white-space: nowrap;
}

.toolbar { display: flex; align-items: center; white-space: nowrap; overflow: hidden; flex: none; }
.main-tools {
  height: 31px; padding: 0 0 0 3px; border-top: 1px solid #f4f6fb; border-bottom: 2px solid #eceef4;
  background: linear-gradient(180deg, #dce1f0, #d2d8ea);
}
.ic { width: 16px; height: 16px; flex: none; display: block; }
.ti { display: flex; align-items: center; gap: 4px; margin-right: 7px; flex: none; height: 21px; color: #151515; padding-top: 2px; }
.ti .ic { margin-top: -2px; }
.btn {
  padding: 2px 2px 0; height: 22px; width: 50px; border: 1px solid #5c6068; border-radius: 3px;
  background: linear-gradient(180deg, #eef0f4, #d5d8de);
}
.mr0 { margin-right: 0; } .mr2 { margin-right: 2px; } .mr3 { margin-right: 3px; } .mr4 { margin-right: 4px; }
.mr5 { margin-right: 5px; } .mr6 { margin-right: 6px; } .mr7 { margin-right: 7px; } .mr8 { margin-right: 8px; }
.mr15 { margin-right: 15px; } .mr71 { margin-right: 71px; }
.ms { margin-right: 6px; }
.sp { margin-right: 6px; }
.arr { width: 7px; height: 4px; background: #222; clip-path: polygon(0 0, 100% 0, 50% 100%); }
.arr.off { background: #a0a4ac; }
.arr.small { width: 5px; height: 3px; }
.sep { width: 1px; height: 22px; background: #9a9a9a; }
.sep.dim { height: 24px; background: #a8aebc; }
.grip {
  width: 2px; height: 24px;
  background: repeating-linear-gradient(180deg, #8d93a4 0 1px, #f6f6f6 1px 3px);
}
.combo { display: flex; height: 22px; background: #fff; flex: none; }
.combo .val { flex: 1; display: flex; align-items: center; padding: 2px 0 0 2px; gap: 2px; overflow: hidden; white-space: nowrap; font-size: 12px; }
.combo .val .ic { margin-top: -2px; }
.drop { width: 12px; flex: none; border: 1px solid #777; background: linear-gradient(180deg, #fafafa, #d8d8d8); position: relative; }
.drop::after { content: ""; position: absolute; left: 2px; top: 8px; width: 7px; height: 4px; background: #222; clip-path: polygon(0 0, 100% 0, 50% 100%); }
.combo.mode { width: 62px; padding-left: 1px; height: 22px; }
.c1 { width: 56px; margin-right: 4px; }
.c2 { width: 68px; margin-right: 4px; }
.c3 { width: 69px; margin-right: 4px; }

.workspace { flex: 1; display: flex; min-height: 0; }

.nav { width: 89px; flex: none; display: flex; flex-direction: column; border-right: 2px solid #a6a6a6; padding-top: 1px; }
.phead { height: 15px; flex: none; display: flex; align-items: center; border: 1px solid #a8a8a8; border-width: 1px 1px 1px 0; background: #f2f2f2; overflow: hidden; }
.ptitle { flex: 1; font-size: 12px; line-height: 13px; padding-top: 2px; white-space: nowrap; }
.navhead .ptitle { margin-left: -5px; }
.pin { width: 8px; height: 10px; margin-right: 8px; flex: none; }
.defcol .pin { margin-right: 10px; }
.defcol .close { margin-right: 2px; }
.close { width: 12px; margin-right: 1px; font: 16px/12px "Liberation Sans"; color: #333; text-align: center; flex: none; }
.navbtn {
  height: 22px; flex: none; margin: 1px 1px 0; padding-right: 7px; text-align: center; line-height: 25px; overflow: hidden;
  background: linear-gradient(180deg, #f6f6f6, #e6e6e6); border: 1px solid #c4c4c4; border-top: 0;
}
.navbtn.first { border-top: 1px solid #c4c4c4; }
.navtools {
  height: 26px; flex: none; display: flex; align-items: center; gap: 6px; padding-bottom: 3px;
  background: linear-gradient(180deg, #dfe5f4, #cdd5ea); border-bottom: 1px solid #b4b8c4; position: relative;
}
.more { width: 8px; height: 6px; flex: none; }
.navtools .more { position: absolute; right: 3px; top: 6px; }
.tree { flex: 1; background: #fff; padding-top: 4px; position: relative; overflow: hidden; min-height: 0; }
.treelines { position: absolute; left: 0; top: 1px; pointer-events: none; }
.tr { height: 16px; display: flex; align-items: center; gap: 4px; padding: 2px 0 0 18px; position: relative; white-space: nowrap; overflow: hidden; }
.tr.lv { padding-left: 38px; }
.tr .ic { margin-top: -2px; }
.tw { position: absolute; left: 6px; top: 4px; width: 5px; height: 8px; border: 4px solid transparent; border-left: 5px solid #aab0b8; border-right: 0; }
.tw.open { left: 5px; top: 5px; width: 7px; height: 6px; border: 0; background: #444; clip-path: polygon(100% 0, 100% 100%, 0 100%); }
.cur > span { position: relative; }
.tr.cur::before { content: ""; position: absolute; left: 35px; right: -3px; top: 1px; bottom: 1px; background: linear-gradient(180deg, #f7f7f7, #e6e6e6); border: 1px solid #d8d8d8; border-radius: 3px; }
.tr.cur svg, .tr.cur span { position: relative; }

.hscroll { height: 11px; display: flex; align-items: center; background: #f3f3f3; position: absolute; }
.navscroll { left: 0; right: 0; bottom: 1px; }
.sl, .sr { width: 4px; height: 7px; background: #555; flex: none; }
.sl { clip-path: polygon(100% 0, 100% 100%, 0 50%); margin-left: 2px; }
.sr { clip-path: polygon(0 0, 100% 50%, 0 100%); margin-left: auto; margin-right: 6px; }
.thumb {
  height: 100%; border: 1px solid #a0a0a0; border-radius: 2px; background: linear-gradient(180deg, #f2f2f2, #cfcfcf);
  text-align: center; font: 9px/9px "Liberation Sans"; color: #555; overflow: hidden;
}
.navscroll .thumb { width: 29px; margin-left: 9px; }

.defcol { width: 151px; flex: none; display: flex; flex-direction: column; padding: 1px 3px 0 4px; min-height: 0; }
.defcol > .phead { border-left: 1px solid #a8a8a8; }
.deftools { height: 34px; flex: none; display: flex; align-items: center; padding: 6px 0 0 7px; position: relative; }
.newlabel { margin: 0 4px 0 2px; padding-top: 2px; }
.xicon { width: 13px; height: 13px; margin: 0 8px 0 11px; }
.moremark { position: absolute; right: 4px; top: 12px; display: flex; flex-direction: column; align-items: center; gap: 8px; }
.deflist { height: 422px; flex: none; margin-left: 1px; background: #fff; border: 1px solid #a8a8a8; border-bottom-width: 2px; position: relative; overflow: hidden; padding-top: 3px; }
.dr { height: 16px; margin-left: -18px; white-space: pre; line-height: 16px; }
.dr.head { margin-left: -28px; }
.dr .c { font-size: 12px; }
.dr.sel { background: linear-gradient(180deg, #f8f8f8, #ececec); box-shadow: inset 0 0 0 1px #e0e0e0; border-radius: 3px; margin-right: 7px; }
.defscroll { left: 1px; right: 1px; bottom: 1px; height: 15px; background: #f4f4f4; }
.defscroll .thumb { width: 66px; height: 14px; margin-left: 43px; line-height: 12px; }
.defscroll .sl { margin-left: 7px; }
.defscroll .sr { margin-right: 7px; }
.prophead { margin-top: 8px; }
.propbox { flex: 1; min-height: 0; border: 1px solid #b4b4b4; border-top: 0; background: #fff; padding: 3px 0 0 1px; overflow: hidden; }
.prop { border-collapse: collapse; table-layout: fixed; width: 141px; font-size: 12px; }
.cn { width: 21px; } .cl { width: 91px; } .cv { width: 29px; }
.prop th { height: 22px; padding: 4px 0 0; font-weight: 400; border-right: 1px solid #c8c8c8; border-bottom: 1px solid #c8c8c8; background: linear-gradient(180deg, #f8f8f8, #ececec); }
.prop .valh { background: linear-gradient(180deg, #f7d796, #f0b95f); border-right: 0; }
.prop td { height: 19px; padding: 4px 0 0; vertical-align: top; border-bottom: 1px solid #c8c8c8; white-space: nowrap; overflow: hidden; line-height: 13px; }
.prop .n { text-align: center; background: #f1f1f1; border-right: 1px solid #c8c8c8; font: 10px/13px "Liberation Mono"; }
.prop .k { padding-left: 19px; border-right: 1px solid #c8c8c8; }
.prop .v { padding-left: 2px; }
.prop .v.mid { text-align: center; padding-left: 0; }
.pub { color: #0000e6; }
.cur .n { background: #fdd08a; color: #70200a; }
.cur .k { background: #3399ff; color: #fff; }
.cur .v { background: #dde9fb; }
.prop .k.grp { padding-left: 19px; color: #8a8a8a; position: relative; }
.prop .k.sub { padding-left: 30px; position: relative; }
.pm { position: absolute; left: 3px; top: 4px; width: 11px; height: 11px; border: 1px solid #b4b4b4; background: linear-gradient(180deg, #fbfbfb, #dfdfdf); }
.pm::before { content: ""; position: absolute; left: 1px; top: 4px; width: 7px; height: 1px; background: #111; }
.pm.plus::after { content: ""; position: absolute; left: 4px; top: 1px; width: 1px; height: 7px; background: #111; }
.elbow { position: absolute; left: 8px; top: 0; width: 17px; height: 10px; border-left: 1px solid #b4b4b4; border-bottom: 1px solid #b4b4b4; }

.stage { flex: 1; min-width: 0; display: flex; flex-direction: column; }
.row2 { height: 28px; padding: 1px 0 0 10px; background: #f0f0f0; border-bottom: 1px solid #d0d0d0; }
.row2 .sep { margin-right: 4px; }
.row2 .sep.sp { margin-right: 6px; }
.row3 { height: 28px; padding: 0 0 0 9px; background: #f1f1f1; border-bottom: 1px solid #c8c8c8; }
.row3 .sep { margin-right: 7px; }
.row3 .sep.sp { margin-right: 6px; }
.canvas { flex: 1; background: #000; min-height: 0; overflow: hidden; }
.cad { display: block; }
.grid path { stroke: #46160a; fill: none; stroke-width: 1; }
.grid .diag { stroke: #48180e; shape-rendering: crispEdges; }
.col { fill: #d5d5d5; }
.white, .orange, .red, .yellow, .tick path, .bl, .green > path { fill: none; stroke-width: 1; }
.white { stroke: #fff; }
.orange { stroke: #d8920c; }
.red { stroke: #f00; }
.redthin { stroke: #f00; fill: none; shape-rendering: crispEdges; }
.yellow { stroke: #ff0; }
.tray { fill: #3f9f9a; stroke: #7eeede; stroke-width: 1; }
.tick path { stroke: #a8f48e; }
.bl { stroke: #8080ff; }
.h1 { fill: url(#hatchA); }
.h2 { fill: url(#hatchB); }
.green > path { stroke: #0f0; }
.cadtext { font: 100 44px "Inter", "Liberation Sans", sans-serif; stroke-width: .2; }
.green text { fill: #0f0; stroke: #0f0; }
.blue text { fill: #8080ff; stroke: #8080ff; }
.mark { fill: none; stroke: #ed1c24; stroke-width: 3.500; stroke-linejoin: round; stroke-linecap: round; }
.note text { font: 400 29px "Noto Sans", "Noto Sans CJK SC", sans-serif; fill: #ed1c24; }
```
